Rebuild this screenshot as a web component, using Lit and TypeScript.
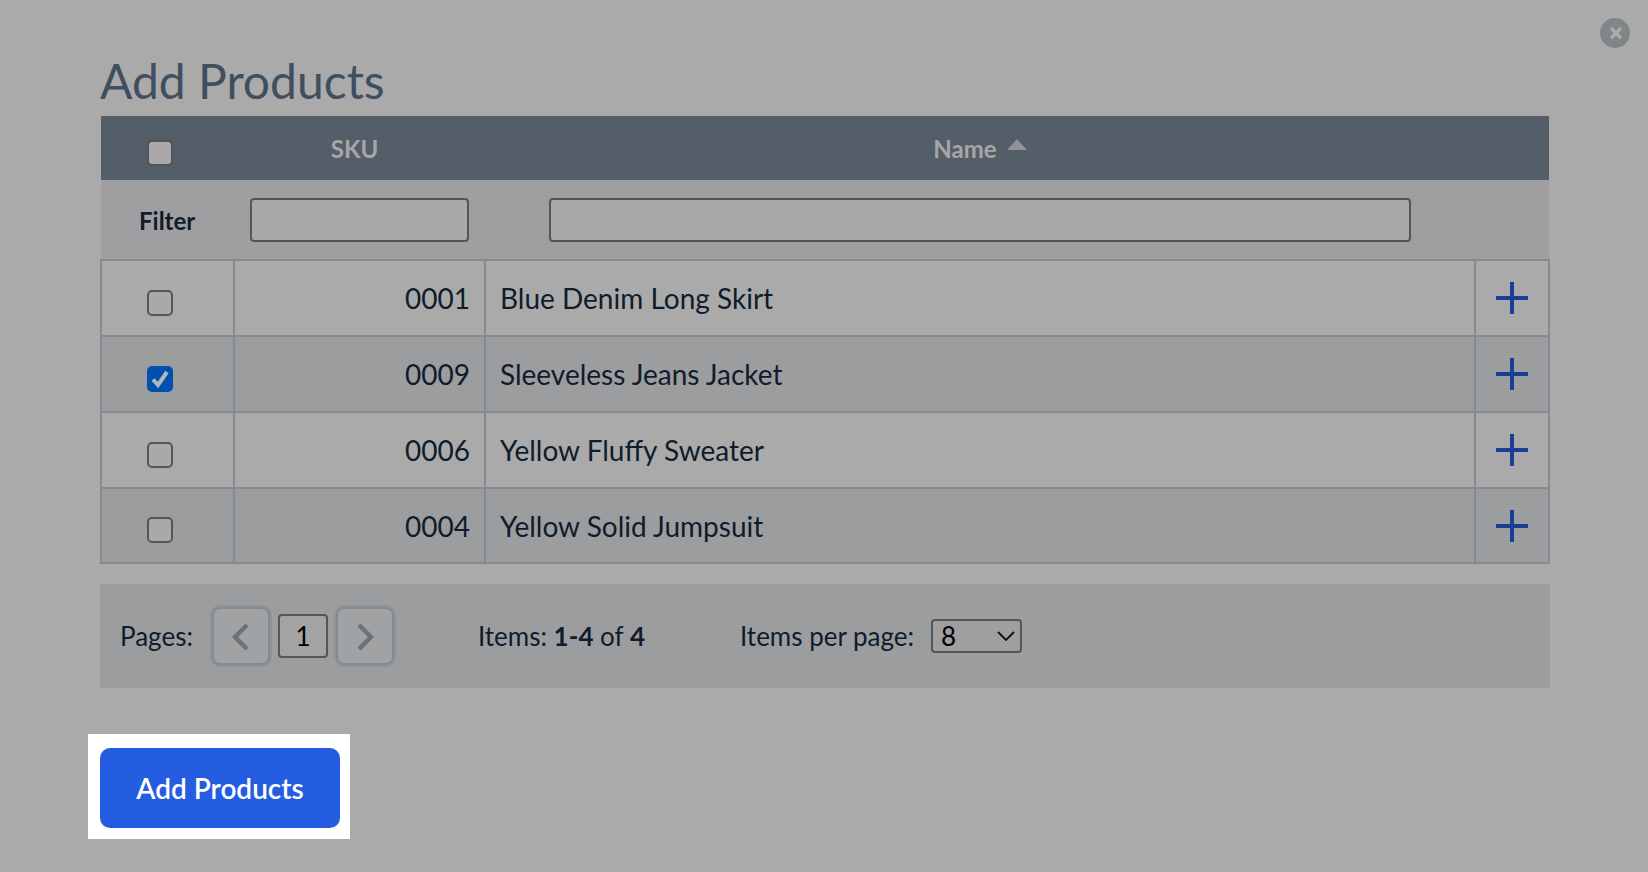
import { LitElement, html, css } from "lit";
import { customElement } from "lit/decorators.js";

interface Row { sku: string; name: string; checked: boolean; }
const ROWS: Row[] = [
  { sku: "0001", name: "Blue Denim Long Skirt", checked: false },
  { sku: "0009", name: "Sleeveless Jeans Jacket", checked: true },
  { sku: "0006", name: "Yellow Fluffy Sweater", checked: false },
  { sku: "0004", name: "Yellow Solid Jumpsuit", checked: false },
];

@customElement("app-root")
export class AppRoot extends LitElement {
  static styles = css`
    :host { display: block; width: 1648px; height: 872px; background: #aaaaaa; font-family: Lato, sans-serif; color: #0f1c2b; position: relative; overflow: hidden; }
    .close { position: absolute; left: 1600px; top: 18px; width: 30px; height: 30px; border-radius: 50%; background: #7f8688; display: flex; align-items: center; justify-content: center; padding-left: 2px; box-sizing: border-box; }
    .page { display: flex; flex-direction: column; padding: 52px 0 0 100px; width: 1450px; }
    h1 { margin: 0 0 6px; font-size: 48px; font-weight: 400; line-height: 58px; color: #3f4f5f; }
    .head { margin: 0 1px; background: #545e69; height: 64px; display: grid; grid-template-columns: 133px 251px 990px 74px; align-items: center; color: #a6a6a6; font-size: 24px; font-weight: 700; }
    .head .cb { margin: 10px 0 0 46px; }
    .sku-h { text-align: center; padding-right: 10px; }
    .name-h { display: flex; justify-content: center; align-items: center; gap: 10px; }
    .caret { width: 0; height: 0; border-left: 10px solid transparent; border-right: 10px solid transparent; border-bottom: 11px solid #8f9399; margin-top: -8px; }
    .filter { margin: 0 1px; height: 79px; background: #9f9fa1; display: grid; grid-template-columns: 149px 299px 862px 1fr; align-items: center; font-size: 24px; font-weight: 700; }
    .filter .lbl { padding: 2px 0 0 38px; }
    .input { box-sizing: border-box; width: 219px; height: 44px; border: 2px solid #555; border-radius: 4px; background: #a9a9a9; padding: 0 8px; margin: 0; display: block; outline: none; }
    .input.wide { width: 862px; }
    .table { border: 2px solid #858b90; display: flex; flex-direction: column; }
    .row { display: grid; grid-template-columns: 133px 251px 990px 1fr; height: 76px; background: #aaaaaa; border-bottom: 2px solid #858b90; box-sizing: border-box; font-size: 28px; }
    .row:last-child { border-bottom: 0; height: 73px; }
    .row.even { background: #9c9d9f; }
    .cell { display: flex; align-items: center; border-right: 2px solid #858b90; box-sizing: border-box; }
    .cell:last-child { border-right: 0; justify-content: center; }
    .cell.c { padding-left: 45px; }
    .cell.c .cb { margin-top: 10px; }
    .row:last-child .cell.c .cb { margin-top: 8px; }
    .cell.s { justify-content: flex-end; padding-right: 14px; }
    .cell.n { padding-left: 14px; }
    .cb { box-sizing: border-box; width: 26px; height: 26px; border: 2px solid #555; border-radius: 5px; background: #a9a9a9; display: flex; align-items: center; justify-content: center; }
    .cb.on { background: #0050b0; border-color: #0050b0; }
    .pager { margin-top: 20px; height: 104px; background: #9c9d9f; display: flex; align-items: center; padding-left: 20px; font-size: 26px; }
    .pbtn { box-sizing: border-box; width: 58px; height: 58px; border: 2px solid #858b90; border-radius: 8px; background: #a0a2a3; box-shadow: 0 0 0 2px rgba(133, 139, 144, 0.5); display: flex; align-items: center; justify-content: center; padding-top: 2px; }
    .pnum { box-sizing: border-box; width: 50px; height: 44px; margin: 0 8px; border: 2px solid #555; border-radius: 4px; background: #a3a3a3; display: flex; align-items: center; justify-content: center; color: #000; font-size: 26px; }
    .pg { margin-right: 19px; }
    .items { margin-left: 84px; }
    .per { margin-left: 95px; margin-right: 17px; }
    b { font-weight: 700; }
    .select { box-sizing: border-box; width: 91px; height: 34px; border: 2px solid #555; border-radius: 4px; background: #9f9f9f; display: flex; align-items: center; justify-content: space-between; padding: 0 5px 0 8px; color: #000; font-size: 26px; }
    .hl { align-self: flex-start; margin: 46px 0 0 -12px; background: #fff; padding: 14px 10px 11px 12px; display: flex; }
    .cta { width: 240px; height: 80px; border-radius: 10px; background: #245de0; color: #fff; border: 0; font: 600 28px Lato, sans-serif; padding: 0; }
  `;

  private check() {
    return html`<svg width="20" height="20" viewBox="0 0 20 20"><path d="M3 10.5 L8 16 L17 3" fill="none" stroke="#b4b8bd" stroke-width="4"/></svg>`;
  }

  render() {
    return html`
      <div class="close"><svg width="14" height="14" viewBox="0 0 14 14"><path d="M2 2 L12 12 M12 2 L2 12" stroke="#acacac" stroke-width="3.4"/></svg></div>
      <div class="page">
        <h1>Add Products</h1>
        <div class="head">
          <div><div class="cb"></div></div>
          <div class="sku-h">SKU</div>
          <div class="name-h"><span>Name</span><span class="caret"></span></div>
          <div></div>
        </div>
        <div class="filter">
          <div class="lbl">Filter</div>
          <div><input class="input" type="text" /></div>
          <div><input class="input wide" type="text" /></div>
          <div></div>
        </div>
        <div class="table">
          ${ROWS.map((r, i) => html`
            <div class="row ${i % 2 ? "even" : ""}">
              <div class="cell c"><div class="cb ${r.checked ? "on" : ""}">${r.checked ? this.check() : ""}</div></div>
              <div class="cell s">${r.sku}</div>
              <div class="cell n">${r.name}</div>
              <div class="cell"><svg width="32" height="32" viewBox="0 0 32 32"><path d="M16 0 V32 M0 16 H32" stroke="#1a3d96" stroke-width="4"/></svg></div>
            </div>`)}
        </div>
        <div class="pager">
          <span class="pg">Pages:</span>
          <div class="pbtn"><svg width="20" height="28" viewBox="0 0 20 28"><path d="M16 2 L4 14 L16 26" fill="none" stroke="#6b7278" stroke-width="4.4"/></svg></div>
          <div class="pnum">1</div>
          <div class="pbtn"><svg width="20" height="28" viewBox="0 0 20 28"><path d="M4 2 L16 14 L4 26" fill="none" stroke="#6b7278" stroke-width="4.4"/></svg></div>
          <span class="items">Items: <b>1-4</b> of <b>4</b></span>
          <span class="per">Items per page:</span>
          <div class="select"><span>8</span><svg width="18" height="10" viewBox="0 0 18 10"><path d="M1 1 L9 9 L17 1" fill="none" stroke="#111" stroke-width="1.8"/></svg></div>
        </div>
        <div class="hl"><button class="cta">Add Products</button></div>
      </div>
    `;
  }
}
